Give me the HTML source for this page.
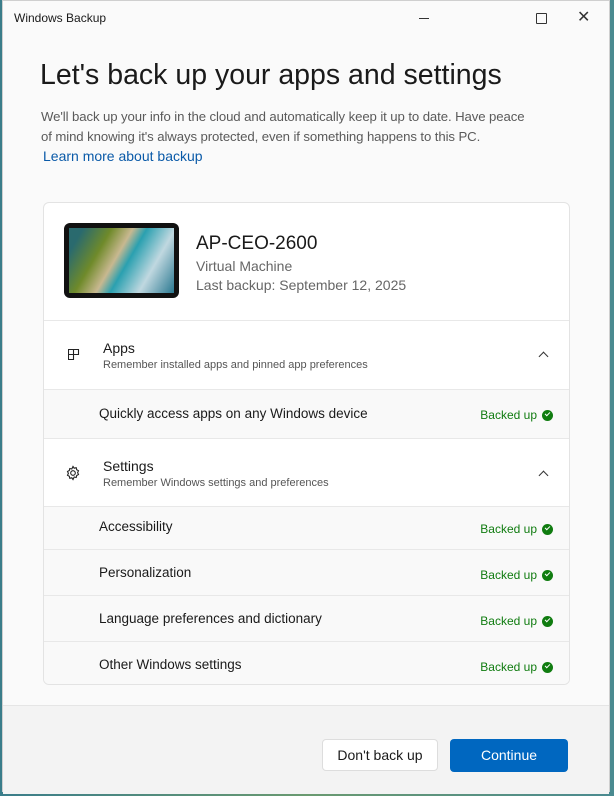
<!DOCTYPE html><html><head><style>
body{margin:0;width:614px;height:796px;background:linear-gradient(90deg,#3a7d8a,#6a9a70 50%,#4a8a90);font-family:"Liberation Sans",sans-serif;position:relative;overflow:hidden}
.win{position:absolute;left:2px;top:0;width:608px;height:792px;background:#fafafa;border:1px solid #cfcfcf;box-sizing:border-box}
.t{position:absolute;font-size:12px;color:#1a1a1a}
.card{position:absolute;left:40px;top:201px;width:527px;height:483px;border:1px solid #e3e3e3;border-radius:6px;background:#fff;overflow:hidden;box-sizing:border-box}
.row{position:absolute;left:0;width:100%;border-top:1px solid #e8e8e8;box-sizing:border-box}
.sub{background:#f9f9f9}
.lbl{position:absolute;left:55px;font-size:13.5px;color:#1a1a1a}
.ok{position:absolute;right:16px;font-size:12px;color:#107c10;display:flex;align-items:center;gap:5px}
.ok i{width:11px;height:11px;border-radius:50%;background:#107c10;display:inline-block;position:relative}
.ok i:after{content:"";position:absolute;left:3px;top:2px;width:4px;height:2px;border-left:1.3px solid #fff;border-bottom:1.3px solid #fff;transform:rotate(-45deg)}
.chev{position:absolute;right:22px;width:6px;height:6px;border-left:1.3px solid #333;border-top:1.3px solid #333;transform:rotate(45deg)}
</style></head><body><div class="win">
<div class="t" style="left:11px;top:10px">Windows Backup</div>
<div style="position:absolute;left:416px;top:17px;width:10px;border-top:1px solid #333"></div>
<div style="position:absolute;left:533px;top:12px;width:9px;height:9px;border:1px solid #333;border-radius:1px"></div>
<div style="position:absolute;left:574px;top:6px;font-size:16px;color:#333">✕</div>
<div style="position:absolute;left:37px;top:58px;font-size:28.5px;color:#1a1a1a">Let's back up your apps and settings</div>
<div style="position:absolute;left:38px;top:106px;width:560px;font-size:13.2px;line-height:20px;color:#5a5a5a;letter-spacing:-0.1px;white-space:nowrap">We'll back up your info in the cloud and automatically keep it up to date. Have peace<br>of mind knowing it's always protected, even if something happens to this PC.</div>
<div style="position:absolute;left:40px;top:147px;font-size:14px;color:#0a5aa8">Learn more about backup</div>
<div class="card">
<div style="position:absolute;left:20px;top:20px;width:115px;height:75px;background:#111;border-radius:6px"><div style="position:absolute;left:5px;top:5px;width:105px;height:65px;background:linear-gradient(120deg,#2a6a6e 10%,#6f8a2a 30%,#c8b890 45%,#2aa0b0 55%,#c0d8e0 75%,#2a7890)"></div></div>
<div style="position:absolute;left:152px;top:30px;font-size:19px;color:#1a1a1a">AP-CEO-2600</div>
<div style="position:absolute;left:152px;top:55px;font-size:14px;color:#666">Virtual Machine</div>
<div style="position:absolute;left:152px;top:74px;font-size:14px;color:#666">Last backup: September 12, 2025</div>
<div class="row" style="top:117px;height:69px">
<svg style="position:absolute;left:24px;top:28px" width="12" height="12" viewBox="0 0 12 12" fill="none" stroke="#222" stroke-width="1.1"><path d="M.5 .5h5v5h-5zM5.5 .5h5v5h-5zM.5 5.5h5v5h-5z"/></svg>
<div style="position:absolute;left:59px;top:19px;font-size:14px;color:#1a1a1a">Apps</div>
<div style="position:absolute;left:59px;top:38px;font-size:11px;color:#555">Remember installed apps and pinned app preferences</div>
<div class="chev" style="top:32px"></div></div>
<div class="row sub" style="top:186px;height:49px"><div class="lbl" style="top:16px">Quickly access apps on any Windows device</div><div class="ok" style="top:18px">Backed up <i></i></div></div>
<div class="row" style="top:235px;height:68px">
<svg style="position:absolute;left:21px;top:26px" width="16" height="16" viewBox="0 0 16 16" fill="none" stroke="#222" stroke-width="1.1"><circle cx="8" cy="8" r="2.3"/><path d="M8 1.5l1.2 1.7 2-.5.5 2 1.8 1-.9 1.9.9 1.9-1.8 1-.5 2-2-.5L8 14.5l-1.2-1.7-2 .5-.5-2-1.8-1 .9-1.9-.9-1.9 1.8-1 .5-2 2 .5z"/></svg>
<div style="position:absolute;left:59px;top:19px;font-size:14px;color:#1a1a1a">Settings</div>
<div style="position:absolute;left:59px;top:38px;font-size:11px;color:#555">Remember Windows settings and preferences</div>
<div class="chev" style="top:33px"></div></div>
<div class="row sub" style="top:303px;height:43px"><div class="lbl" style="top:12px">Accessibility</div><div class="ok" style="top:15px">Backed up <i></i></div></div>
<div class="row sub" style="top:346px;height:46px"><div class="lbl" style="top:15px">Personalization</div><div class="ok" style="top:18px">Backed up <i></i></div></div>
<div class="row sub" style="top:392px;height:46px"><div class="lbl" style="top:15px">Language preferences and dictionary</div><div class="ok" style="top:18px">Backed up <i></i></div></div>
<div class="row sub" style="top:438px;height:45px"><div class="lbl" style="top:15px">Other Windows settings</div><div class="ok" style="top:18px">Backed up <i></i></div></div>
</div>
<div style="position:absolute;left:0;top:704px;width:100%;height:88px;background:#f3f3f3;border-top:1px solid #e5e5e5"></div>
<div style="position:absolute;left:319px;top:738px;width:116px;height:32px;background:#fff;border:1px solid #ddd;border-radius:4px;box-sizing:border-box;font-size:14px;color:#1a1a1a;text-align:center;line-height:31px">Don't back up</div>
<div style="position:absolute;left:447px;top:738px;width:118px;height:33px;background:#0067c0;border-radius:4px;font-size:14px;color:#fff;text-align:center;line-height:33px">Continue</div>
</div></body></html>
